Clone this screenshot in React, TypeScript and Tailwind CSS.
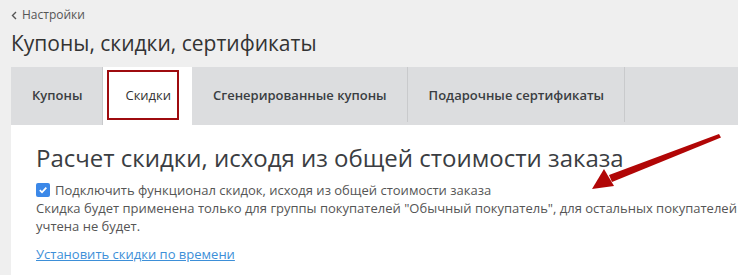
import React from "react";

const tabs = [
  { id: 1, label: "Купоны", active: false },
  { id: 2, label: "Скидки", active: true },
  { id: 3, label: "Сгенерированные купоны", active: false },
  { id: 4, label: "Подарочные сертификаты", active: false },
];

export default function App() {
  return (
    <div
      className="relative w-[738px] h-[275px] overflow-hidden bg-[#efefef] pl-[11px]"
      style={{ fontFamily: '"Open Sans", "Noto Sans", sans-serif' }}
    >
      <div className="pt-[6px] flex items-center gap-[5px] text-[12px] leading-[18px] text-[#555]">
        <svg width="6" height="9" viewBox="0 0 6 9" className="mt-[1px]">
          <path d="M5 1 L1.5 4.5 L5 8" stroke="#555" strokeWidth="1.4" fill="none" />
        </svg>
        <span>Настройки</span>
      </div>
      <h1 className="mt-[5px] text-[21px] leading-[28px] text-[#333] font-normal">
        Купоны, скидки, сертификаты
      </h1>

      <div className="mt-[10px] flex h-[58px] bg-[#dcdddf]">
        {tabs.map(({ id, label, active }) => (
          <div
            key={id}
            className={`relative flex items-center text-[13px] px-[21px] ${
              active ? "bg-white text-[#333] font-normal" : "text-[#3a3d42] font-semibold"
            }`}
          >
            {active && (
              <div className="absolute left-[4px] top-[3px] w-[72px] h-[50px] border-2 border-[#9e0b0f]" />
            )}
            <span className={active ? "pl-[1px]" : ""}>{label}</span>
            {!active && id !== 1 && (
              <div className="absolute right-0 top-0 bottom-[3px] w-px bg-[#c9cacc]" />
            )}
            {id === 1 && <div className="absolute right-0 top-0 bottom-0 w-px bg-[#c9cacc]" />}
          </div>
        ))}
      </div>

      <div className="bg-white h-full pl-[25px] pt-[17px]">
        <h2 className="text-[24px] leading-[32px] text-[#3a3d42] font-normal">
          Расчет скидки, исходя из общей стоимости заказа
        </h2>
        <label className="mt-[7px] flex items-center gap-[5px] text-[13px] leading-[18px] text-[#555]">
          <span className="w-[14px] h-[14px] rounded-[2px] bg-[#3b88e8] flex items-center justify-center">
            <svg width="10" height="10" viewBox="0 0 10 10">
              <path d="M1.8 5.2 L4 7.3 L8.3 2.6" stroke="#fff" strokeWidth="1.8" fill="none" />
            </svg>
          </span>
          Подключить функционал скидок, исходя из общей стоимости заказа
        </label>
        <p className="text-[13px] leading-[18px] text-[#555] whitespace-nowrap">
          Скидка будет применена только для группы покупателей "Обычный покупатель", для остальных покупателей
          <br />
          учтена не будет.
        </p>
        <a href="#" className="inline-block mt-[10px] text-[13px] leading-[18px] text-[#3d8fd8] underline">
          Установить скидки по времени
        </a>
      </div>

      <svg className="absolute left-0 top-0 pointer-events-none" width="738" height="275">
        <path d="M719 134 L721 137.5 L612 182 L609 175 Z" fill="#b10606" />
        <path d="M592 189 L604 169 L614 186 Z" fill="#b10606" />
      </svg>
    </div>
  );
}
